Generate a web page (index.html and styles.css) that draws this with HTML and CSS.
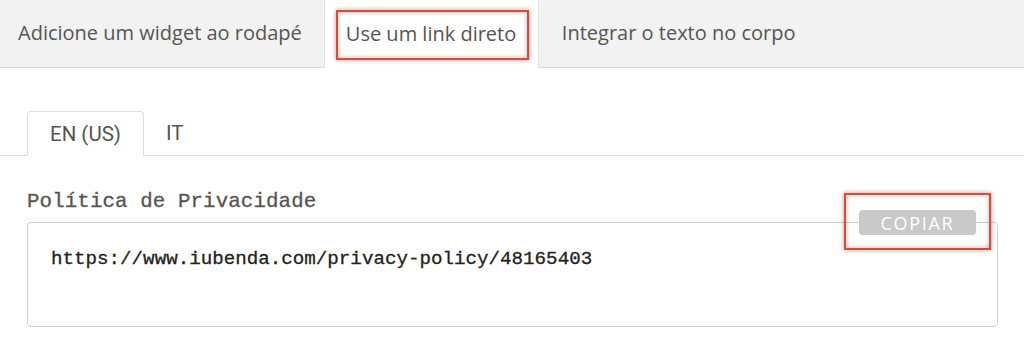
FILE: index.html
```html
<!DOCTYPE html>
<html>
<head>
	<meta charset="utf-8">
	<title>Link direto</title>
	<link rel="stylesheet" href="styles.css">
</head>
<body>
	<div class="tabs">
		<div class="tab">Adicione um widget ao rodapé</div>
		<div class="tab active">
			Use um link direto
			<span class="mark mark-tab"></span>
		</div>
		<div class="tab rest">Integrar o texto no corpo</div>
	</div>
	<div class="lang-tabs">
		<div class="lang active">EN (US)</div>
		<div class="lang">IT</div>
	</div>
	<div class="panel">
		<div class="label">Política de Privacidade</div>
		<div class="field">
			<div class="url">https://www.iubenda.com/privacy-policy/48165403</div>
			<div class="copy">
				<span class="copy-btn">COPIAR</span>
				<span class="mark mark-copy"></span>
			</div>
		</div>
	</div>
</body>
</html>
```

FILE: styles.css
```css
html, body {
	margin: 0;
	padding: 0;
	background: #fff;
	font-family: "Open Sans", sans-serif;
	color: #555;
}
.tabs {
	display: flex;
	height: 68px;
	background: #f2f2f2;
	border-bottom: 1px solid #dcdcdc;
	box-sizing: border-box;
}
.tab {
	display: flex;
	align-items: center;
	flex-shrink: 0;
	white-space: nowrap;
	padding: 0 22px 2px 18px;
	font-size: 20px;
	color: #555;
	border-right: 1px solid #e2e2e2;
	position: relative;
	box-sizing: border-box;
}
.tab.active {
	background: #fff;
	width: 214px;
	padding-left: 21px;
	margin-bottom: -1px;
	border-right: 1px solid #e6e6e6;
}
.tab.rest {
	flex: 1;
	border-right: 0;
	padding-left: 23px;
}
.mark {
	position: absolute;
	border: 2px solid #e8462f;
	box-shadow: 0 0 5px rgba(0,0,0,0.35), inset 0 0 5px rgba(0,0,0,0.3);
	box-sizing: border-box;
}
.mark-tab {
	left: 11px;
	top: 10px;
	width: 193px;
	height: 50px;
}
.lang-tabs {
	display: flex;
	margin-top: 43px;
	padding-left: 27px;
	border-bottom: 1px solid #dcdcdc;
	height: 44px;
}
.lang {
	display: flex;
	align-items: center;
	padding: 0 22px;
	font-family: Roboto, sans-serif;
	font-size: 20.5px;
	color: #555;
}
.lang.active {
	width: 117px;
	box-sizing: border-box;
	justify-content: center;
	padding: 0;
	border: 1px solid #dcdcdc;
	border-bottom: 0;
	border-radius: 4px 4px 0 0;
	background: #fff;
	margin-bottom: -1px;
}
.panel {
	padding: 0 26px 0 27px;
}
.label {
	margin-top: 34px;
	font-family: "Liberation Mono", monospace;
	font-size: 20.8px;
	letter-spacing: 0.1px;
	color: #555;
	-webkit-text-stroke: 0.3px #555;
}
.field {
	position: relative;
	margin-top: 9px;
	height: 105px;
	border: 1px solid #cfcfcf;
	border-radius: 4px;
	box-sizing: border-box;
	padding: 25px 23px;
}
.url {
	font-family: "Liberation Mono", monospace;
	font-size: 19.2px;
	color: #222;
	-webkit-text-stroke: 0.3px #222;
}
.copy {
	position: absolute;
	right: 21px;
	top: -13px;
	background: #fff;
}
.copy-btn {
	display: block;
	width: 117px;
	height: 25px;
	line-height: 26px;
	text-align: center;
	background: #c9c9c9;
	border-radius: 4px;
	color: #fff;
	font-family: "Open Sans", sans-serif;
	font-size: 18px;
	letter-spacing: 1.7px;
}
.mark-copy {
	left: -15px;
	top: -17px;
	width: 147px;
	height: 57px;
}
```
